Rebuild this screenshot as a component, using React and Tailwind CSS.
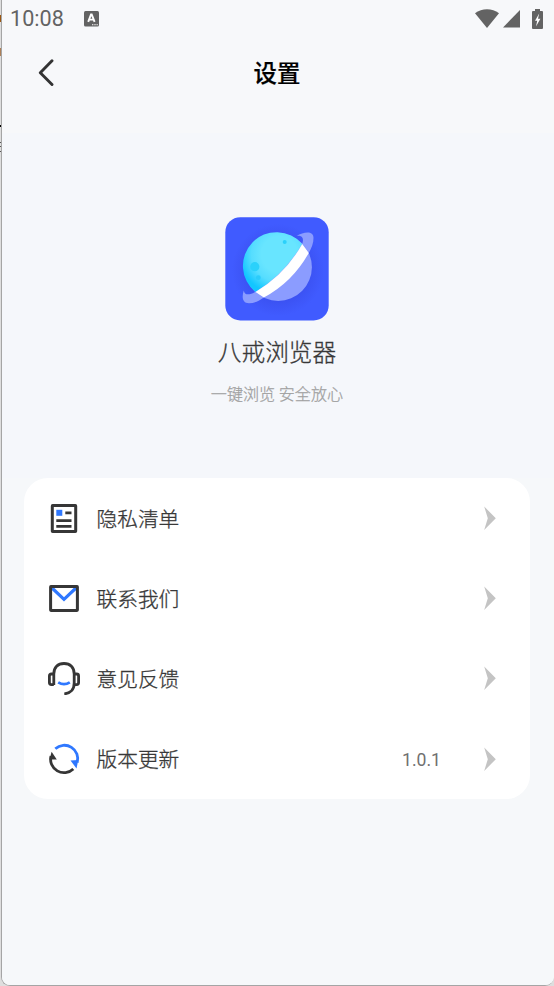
const StatusBar = () => (
  <div className="flex h-[38px] items-center justify-between pl-2 pr-[11px] text-[#636363]">
    <div className="flex items-center">
      <span className="font-[Roboto,sans-serif] text-[21.6px] leading-none">10:08</span>
      <svg className="ml-[20.5px]" width="15" height="16" viewBox="0 0 15 16">
        <rect width="15" height="15.5" rx="1.5" fill="#636363" />
        <path d="M4.2 10.9 7 3.4h.7l2.9 7.5M5.3 8.6h4.2" fill="none" stroke="#fff" strokeWidth="1.9" />
        <path d="M8 13.8h1.4M10.3 13.8h1.4M12.5 13.8h1.3" stroke="#fff" strokeWidth="1.1" />
      </svg>
    </div>
    <div className="flex items-center">
      <svg width="24" height="20" viewBox="0 0 24 20">
        <path d="M0 4.3C7-1.1 17-1.1 24 4.3L12 19Z" fill="#636363" />
      </svg>
      <svg className="ml-1" width="17" height="18" viewBox="0 0 17 18">
        <path d="M17 0v17.5H0Z" fill="#636363" />
      </svg>
      <svg className="ml-3" width="11" height="20" viewBox="0 0 11 20">
        <path d="M3 0h5v2h2q1 0 1 1v16q0 1-1 1H1q-1 0-1-1V3q0-1 1-1h2Z" fill="#636363" />
        <path d="M7.2 4.5 3 11.8h2.2L4 17.5 8.4 9.8H6Z" fill="#fff" />
      </svg>
    </div>
  </div>
)

const PlanetLogo = () => (
  <svg width="104" height="104" viewBox="0 0 104 104">
    <defs>
      <radialGradient id="planet" cx="54" cy="37" r="40" gradientUnits="userSpaceOnUse">
        <stop offset="0.45" stopColor="#68e5ff" />
        <stop offset="0.7" stopColor="#56ddff" />
        <stop offset="1" stopColor="#12c6ff" />
      </radialGradient>
      <radialGradient id="glow" cx="53" cy="53" r="46" gradientUnits="userSpaceOnUse">
        <stop offset="0.6" stopColor="#3a50f0" />
        <stop offset="1" stopColor="#405bff" />
      </radialGradient>
    </defs>
    <rect x="0.3" y="0.2" width="103.4" height="103.2" rx="15" fill="url(#glow)" />
    <g transform="translate(0.5 0.2)">
      <circle cx="52.7" cy="50" r="33.7" fill="#8b9cff" />
      <path d="M76.7 26.7A33.7 33.7 0 1 0 30 74.9Q59 57 76.7 26.7Z" fill="url(#planet)" />
      <path
        d="M71 18.7C78 14.7 87.9 13 88 20.5C88.2 25.5 86 31 83.3 35.7L76.7 26.7C79 20.5 76 18 71 18.7Z"
        fill="#8b9cff"
      />
      <path
        d="M18.3 73.3C16 80 17 86 23.5 86C29 86 34 83.5 38.3 80.3L30 74.5C24 78 19 78.5 18.3 73.3Z"
        fill="#8b9cff"
      />
      <path d="M76.7 26.7L83.3 35.7Q67 65 38.3 80.3L30 74.7Q60 57 76.7 26.7Z" fill="#fff" />
      <circle cx="29.3" cy="49.5" r="4.6" fill="#2bd1fb" />
      <circle cx="32.8" cy="60.5" r="2.4" fill="#2bccfb" />
      <circle cx="59.2" cy="24.8" r="2" fill="#2bd1fb" />
    </g>
  </svg>
)

const ListIcon = () => (
  <svg width="34" height="34" viewBox="0 0 34 34" fill="none" stroke="#363636" strokeWidth="3">
    <rect x="5.3" y="4.6" width="23.4" height="26" rx="0.3" />
    <path d="M18.3 11.8H24.5M9.3 19.7h15.2M9.3 25.4h15.2" strokeWidth="2.8" />
    <path d="M9.3 8.8h6v6h-6Z" fill="#2f78ff" stroke="none" />
  </svg>
)

const MailIcon = () => (
  <svg width="34" height="34" viewBox="0 0 34 34" fill="none">
    <path d="m4.5 6.5 12.5 11.8L29.5 6.5" stroke="#2f78ff" strokeWidth="3.2" />
    <rect x="3.6" y="5.6" width="26.8" height="23.8" rx="0.3" stroke="#363636" strokeWidth="3" />
  </svg>
)

const HeadsetIcon = () => (
  <svg width="34" height="34" viewBox="0 0 34 34" fill="none" stroke="#363636" strokeWidth="2.8">
    <path d="M6.8 24V13C6.8 6.5 10.8 2.5 17 2.5S27.2 6.5 27.2 13V22C27.2 28.4 23.5 32.4 17.3 32.8" />
    <path d="M6.8 13H4.4q-2 0-2 2v6.6q0 2 2 2h2.4M27.2 13h2.4q2 0 2 2v6.6q0 2-2 2h-2.4" />
    <path d="M11.2 21.3q5.8 3.8 11.6 0" stroke="#2f78ff" />
  </svg>
)

const UpdateIcon = () => (
  <svg width="34" height="34" viewBox="0 0 34 34" fill="none" strokeWidth="2.8">
    <path d="M8.3 6.8A13.4 13.4 0 0 1 30.2 20.5" stroke="#2f78ff" />
    <path d="m23.5 18.5 7.8-.6-1.8 8.5Z" fill="#2f78ff" />
    <path d="M26.3 26.9A13.4 13.4 0 0 1 4 14" stroke="#363636" />
    <path d="M2.6 17.6 4.6 9.8l5.2 7.6Z" fill="#363636" />
  </svg>
)

const items = [
  { label: "隐私清单", icon: ListIcon },
  { label: "联系我们", icon: MailIcon },
  { label: "意见反馈", icon: HeadsetIcon },
  { label: "版本更新", icon: UpdateIcon, value: "1.0.1" },
]

const SettingsRow = ({ item }) => {
  const Icon = item.icon
  return (
    <button className="flex h-[80.2px] w-full items-center pl-[23px] pr-[34px] text-left">
      <Icon />
      <span className="ml-[15.5px] flex-1 text-[20.7px] font-light text-[#383838] [-webkit-text-stroke:0.3px_#383838]">
        {item.label}
      </span>
      {item.value && (
        <span className="mr-[43px] pt-[3px] font-[Roboto,sans-serif] text-[17.6px] text-[#707070]">
          {item.value}
        </span>
      )}
      <svg width="12" height="24" viewBox="0 0 12 24">
        <path d="M.2.5 11.8 12.2 .2 23.9 3.8 12.2Z" fill="#c4c4c4" />
      </svg>
    </button>
  )
}

// Sliver of the window that sits behind the phone screen
const BackgroundEdge = () => (
  <div className="flex w-px shrink-0 flex-col bg-[#dedede]">
    <div className="mt-[15px] h-[7px] bg-[#9a5712]" />
    <div className="mt-[26px] h-2 bg-[#ad8058]" />
    <div className="mt-[69px] h-0.5 bg-black" />
    <div className="mt-[15px] h-px bg-[#555]" />
    <div className="mt-[3px] h-px bg-[#555]" />
    <div className="mt-1 h-px bg-[#555]" />
  </div>
)

const App = () => {
  return (
    <div className="flex h-[986px] w-[554px] overflow-hidden bg-[#dedede] font-['Noto_Sans_CJK_SC',sans-serif]">
      <BackgroundEdge />
      <div className="flex flex-1 flex-col overflow-hidden rounded-b-[9px] border-b border-l border-[#a5a5a5] bg-[#f7f8fa]">
        <StatusBar />

        {/* Header */}
        <header className="grid h-[95px] grid-cols-[1fr_auto_1fr] items-start pl-9 pr-[38px] pt-4">
          <svg className="mt-[5px]" width="17" height="28" viewBox="0 0 17 28">
            <path
              d="M14 1.8 2.3 13.8 14 25.5"
              fill="none"
              stroke="#333"
              strokeWidth="2.9"
              strokeLinecap="round"
              strokeLinejoin="round"
            />
          </svg>
          <h1 className="text-[23.4px] font-medium leading-9 text-black [-webkit-text-stroke:0.2px_black]">设置</h1>
        </header>

        {/* App info */}
        <section className="flex h-[345px] flex-col items-center bg-[#f5f7fb] pr-0.5 pt-[84px]">
          <PlanetLogo />
          <h2 className="mt-3 text-[23.7px] font-light leading-9 text-[#383838] [-webkit-text-stroke:0.3px_#383838]">
            八戒浏览器
          </h2>
          <p className="mt-[12px] text-[16.1px] font-light leading-6 text-[#a0a0a0] [-webkit-text-stroke:0.25px_#a0a0a0]">
            一键浏览 安全放心
          </p>
        </section>

        {/* Settings */}
        <div className="flex-1 bg-[#f6f8fa] pl-[22px] pr-6">
          <div className="rounded-3xl bg-white">
            {items.map((item) => (
              <SettingsRow key={item.label} item={item} />
            ))}
          </div>
        </div>
      </div>
    </div>
  )
}

export default App
